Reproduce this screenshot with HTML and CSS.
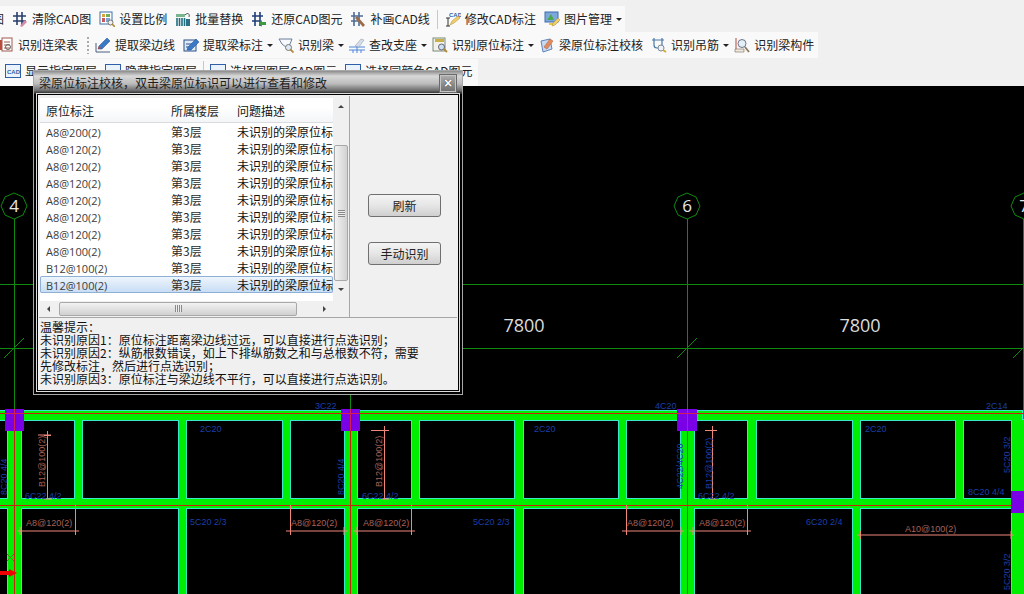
FILE: index.html
```html
<!DOCTYPE html>
<html lang="zh">
<head>
<meta charset="utf-8">
<title>梁原位标注校核</title>
<link rel="stylesheet" href="styles.css">
</head>
<body>
<div class="app">
  <header class="toolbars">
    <div class="bar bar-one">
      <span class="label">图</span>
      <span class="tool"><svg class="ico" viewBox="0 0 16 16"><path d="M5 1v13M10 1v13M1 5h13M1 10h13" stroke="#27406e" stroke-width="1.6" fill="none"/><path d="M8 15l5-6 2 2-5 5z" fill="#d58aa8"/></svg><span class="label">清除CAD图</span></span>
      <span class="tool"><svg class="ico" viewBox="0 0 16 16"><rect x="1" y="1" width="12" height="12" fill="#fff" stroke="#3d6fa8"/><rect x="3" y="3" width="3" height="3" fill="#d9a23c"/><rect x="7" y="3" width="4" height="3" fill="#6fae5a"/><rect x="3" y="7" width="3" height="4" fill="#c75b5b"/><rect x="7" y="7" width="4" height="4" fill="#7aa3d6"/><circle cx="11.5" cy="11.5" r="2.5" fill="#eee" stroke="#777"/><path d="M13 13l3 3" stroke="#b08a3c" stroke-width="1.6"/></svg><span class="label">设置比例</span></span>
      <span class="tool"><svg class="ico" viewBox="0 0 16 16"><rect x="1" y="3" width="9" height="3" fill="#79b58e"/><path d="M2 7v8M4.500 7v8M7 7v8M9.500 7v8" stroke="#1f6f80" stroke-width="1.600"/><path d="M10 4c3-3 5-1 4 2" stroke="#555" fill="none"/><rect x="11" y="8" width="4" height="7" fill="#2b6f86"/></svg><span class="label">批量替换</span></span>
      <span class="tool"><svg class="ico" viewBox="0 0 16 16"><path d="M4 1v14M9 1v14M1 5h11M1 10h8" stroke="#1f3f78" stroke-width="1.600" fill="none"/><path d="M8 12l3-3v2h4v3h-4v2z" fill="#3d9a3d"/></svg><span class="label">还原CAD图元</span></span>
      <span class="tool"><svg class="ico" viewBox="0 0 16 16"><path d="M4 1v14M9 1v14M1 5h12M1 10h9" stroke="#4f6c96" stroke-width="1.600" fill="none"/><path d="M7 5l8 9-2 2-8-9z" fill="#9a6d4a"/></svg><span class="label">补画CAD线</span></span>
      <i class="sep"></i>
      <span class="tool"><svg class="ico" viewBox="0 0 16 16"><text class="ico-cad" x="4" y="6">CAD</text><path d="M1 7h4M3 7v8M1 15h4" stroke="#333" fill="none"/><path d="M5 14l2-4 6-5 2 2-6 5z" fill="#f0cf6a" stroke="#a88a30" stroke-width=".5"/></svg><span class="label">修改CAD标注</span></span>
      <span class="tool"><svg class="ico" viewBox="0 0 16 16"><rect x="1" y="1" width="13" height="10" fill="#7da8dc" stroke="#3e6cae"/><path d="M3 9l4-6 3 6z" fill="#4ea84a"/><rect x="5" y="12" width="6" height="2" fill="#e8c84a"/><path d="M8 15l1-3 5-5 2 2-5 5z" fill="#f0cf6a" stroke="#a88a30" stroke-width=".5"/></svg><span class="label">图片管理</span><i class="caret"></i></span>
    </div>
    <div class="bar bar-two">
      <span class="tool"><svg class="ico" viewBox="0 0 16 16"><rect x="0" y="3" width="6" height="10" fill="#b84a3e"/><rect x="4" y="1" width="10" height="13" fill="#fff" stroke="#a25a50"/><path d="M6 5h6M6 8h6M6 11h6" stroke="#a25a50"/><circle cx="10" cy="10" r="2.500" fill="none" stroke="#666"/></svg><span class="label">识别连梁表</span></span>
      <i class="grip"></i>
      <span class="tool"><svg class="ico" viewBox="0 0 16 16"><path d="M1 15h14M1 15V6" stroke="#4a5f80" fill="none"/><path d="M3 12l1-3 8-8 3 3-8 8z" fill="#3a78c8" stroke="#1f4a86" stroke-width=".5"/><path d="M3 12l1-3 2 2z" fill="#d8452c"/></svg><span class="label">提取梁边线</span></span>
      <span class="tool"><svg class="ico" viewBox="0 0 16 16"><rect x="1" y="3" width="12" height="11" fill="#dfe9f5" stroke="#28508c"/><path d="M3 7h6M3 10h4" stroke="#28508c"/><path d="M4 13l1-3 8-8 3 3-8 8z" fill="#3a78c8" stroke="#1f4a86" stroke-width=".5"/></svg><span class="label">提取梁标注</span><i class="caret"></i></span>
      <span class="tool"><svg class="ico" viewBox="0 0 16 16"><path d="M1 2h13l-2 5-3 4-5-4z" fill="#f6f8fb" stroke="#6a7f9a"/><circle cx="10.500" cy="10.500" r="3" fill="#dfe8f2" stroke="#777"/><path d="M12.500 12.500l3 3" stroke="#b08a3c" stroke-width="1.800"/></svg><span class="label">识别梁</span><i class="caret"></i></span>
      <span class="tool"><svg class="ico" viewBox="0 0 16 16"><path d="M0 10h16M0 13h16M8 9v7M4 13v3M12 13v3" stroke="#4a86d8" fill="none"/><path d="M6 9l6-7 3 1-5 7z" fill="#d4dde8" stroke="#8a98aa" stroke-width=".5"/></svg><span class="label">查改支座</span><i class="caret"></i></span>
      <span class="tool"><svg class="ico" viewBox="0 0 16 16"><rect x="1" y="1" width="12" height="13" fill="#f2f2ea" stroke="#7a8a78"/><rect x="3" y="2" width="9" height="3" fill="#c8b04a"/><circle cx="9.500" cy="10" r="3" fill="#cfe0ee" stroke="#667"/><path d="M12 12l3 3" stroke="#b08a3c" stroke-width="1.800"/></svg><span class="label">识别原位标注</span><i class="caret"></i></span>
      <span class="tool"><svg class="ico" viewBox="0 0 16 16"><path d="M2 4l9-2 2 10-9 3z" fill="#c8d9f0" stroke="#5f86bb"/><path d="M5 10l6-8 3 2-6 8z" fill="#e58a5a" stroke="#a85a3a" stroke-width=".5"/></svg><span class="label">梁原位标注校核</span></span>
      <span class="tool"><svg class="ico" viewBox="0 0 16 16"><path d="M3 1v7q0 3 3 3h2q3 0 3-3V1" stroke="#4a78a8" fill="none" stroke-width="1.200"/><path d="M1 3h12" stroke="#4a78a8"/><circle cx="10" cy="11" r="3" fill="#eef3f8" stroke="#7a8a9a"/><path d="M12 13l3 2" stroke="#d4a92e" stroke-width="1.800"/></svg><span class="label">识别吊筋</span><i class="caret"></i></span>
      <span class="tool"><svg class="ico" viewBox="0 0 16 16"><path d="M2 1v13h8" stroke="#b5483c" fill="none"/><path d="M1 12h9v3H1z" fill="#efe9de" stroke="#7a6a58" stroke-width=".6"/><circle cx="8" cy="6.500" r="4" fill="#e6eef6" stroke="#6a7788"/><path d="M11 10l4 5" stroke="#8a7a60" stroke-width="1.800"/></svg><span class="label">识别梁构件</span></span>
    </div>
    <div class="bar bar-three">
      <span class="tool"><svg class="ico" viewBox="0 0 16 16"><rect x=".5" y="1.500" width="15" height="13" fill="#eaf2fb" stroke="#2f5fa6"/><text class="ico-cad" x="2" y="10.500">CAD</text></svg><span class="label">显示指定图层</span></span>
      <span class="tool"><svg class="ico" viewBox="0 0 16 16"><rect x=".5" y="1.500" width="15" height="13" fill="#eaf2fb" stroke="#2f5fa6"/><text class="ico-cad" x="2" y="10.500">CAD</text></svg><span class="label">隐藏指定图层</span></span>
      <i class="sep"></i>
      <span class="tool"><svg class="ico" viewBox="0 0 16 16"><rect x=".5" y="1.500" width="15" height="13" fill="#eaf2fb" stroke="#2f5fa6"/><text class="ico-cad" x="2" y="10.500">CAD</text></svg><span class="label">选择同图层CAD图元</span></span>
      <span class="tool"><svg class="ico" viewBox="0 0 16 16"><rect x=".5" y="1.500" width="15" height="13" fill="#eaf2fb" stroke="#2f5fa6"/><text class="ico-cad" x="2" y="10.500">CAD</text></svg><span class="label">选择同颜色CAD图元</span></span>
    </div>
  </header>

  <main class="canvas">
    <svg class="drawing" viewBox="0 86 1024 508" xmlns="http://www.w3.org/2000/svg">
      <defs>
        <g id="frame">
          <rect x="-4" y="411" width="1026" height="9"/>
          <rect x="-4" y="499" width="1016" height="9"/>
          <rect x="8" y="420" width="13" height="180"/>
          <rect x="345" y="420" width="12" height="180"/>
          <rect x="681" y="420" width="13" height="180"/>
          <rect x="1012" y="420" width="16" height="180"/>
          <rect x="75" y="420" width="7" height="80"/>
          <rect x="179" y="420" width="7" height="80"/>
          <rect x="283" y="420" width="7" height="80"/>
          <rect x="412" y="420" width="7" height="80"/>
          <rect x="515" y="420" width="8" height="80"/>
          <rect x="619" y="420" width="7" height="80"/>
          <rect x="748" y="420" width="8" height="80"/>
          <rect x="853" y="420" width="7" height="80"/>
          <rect x="956" y="420" width="7" height="80"/>
          <rect x="179" y="507" width="7" height="93"/>
          <rect x="515" y="507" width="8" height="93"/>
          <rect x="853" y="507" width="7" height="93"/>
        </g>
      </defs>

      <g class="grid">
        <path d="M0 284.500H1024M0 348.500H1024M14.500 219V420M350.500 219V420M687.500 219V420M1023.500 219V420"/>
        <path d="M4 358L24 338M340 358L360 338M677 358L697 338M1013 358L1033 338"/>
        <path d="M14 193l9 4 4 9-4 9-9 4-9-4-4-9 4-9z"/>
        <path d="M687 193l9 4 4 9-4 9-9 4-9-4-4-9 4-9z"/>
        <path d="M1024 193l9 4 4 9-4 9-9 4-9-4-4-9 4-9z"/>
      </g>
      <text class="axis" x="14" y="212">4</text>
      <text class="axis" x="687" y="212">6</text>
      <text class="axis" x="1024" y="212">7</text>
      <text class="span" x="524" y="332">7800</text>
      <text class="span" x="860" y="332">7800</text>

      <use href="#frame" class="beam-edge"/>
      <use href="#frame" class="beam-fill"/>

      <g class="axis-red">
        <path d="M0 413.500H1024M0 505.500H1024M14.500 409V594M350.500 409V594M687.500 409V594"/>
      </g>
      <g class="col">
        <rect x="5" y="409" width="19" height="22"/>
        <rect x="341" y="409" width="19" height="22"/>
        <rect x="677" y="409" width="20" height="22"/>
        <rect x="1011" y="491" width="13" height="22"/>
      </g>
      <g class="col-line">
        <path d="M5 413.500H24M341 413.500H360M677 413.500H697M14.500 409V431M350.500 409V431M687.500 409V431"/>
      </g>

      <g class="dim">
        <path d="M47.500 435V499M38 435H51M44 435.500h7M47.500 431v8M44 499h8"/>
        <path d="M384.500 430V499M371 430.500H389M384.500 426v8M381 499h8"/>
        <path d="M712.500 430V499M705 430.500H717M712.500 426v8M709 499h8"/>
        <path d="M17 531H79M75.500 505V535M20 527v8"/>
        <path d="M286 531H348M290.500 505V535M344 527v8"/>
        <path d="M353 531H415M411.500 505V535M357 527v8"/>
        <path d="M622 531H684M626.500 505V535M681 527v8"/>
        <path d="M689 531H751M747.500 505V535M693 527v8"/>
        <path d="M857 535H1014M860.500 531v8M1011 531v8"/>
      </g>
      <g class="dim-text">
        <text x="26" y="526">A8@120(2)</text>
        <text x="291" y="526">A8@120(2)</text>
        <text x="363" y="526">A8@120(2)</text>
        <text x="627" y="526">A8@120(2)</text>
        <text x="699" y="526">A8@120(2)</text>
        <text x="905" y="532">A10@100(2)</text>
        <text transform="translate(45 487) rotate(-90)">B12@100(2)</text>
        <text transform="translate(382 487) rotate(-90)">B12@100(2)</text>
      </g>
      <g class="rebar">
        <text x="315" y="409">3C22</text>
        <text x="655" y="409">4C20</text>
        <text x="986" y="409">2C14</text>
        <text x="200" y="432">2C20</text>
        <text x="534" y="432">2C20</text>
        <text x="865" y="432">2C20</text>
        <text x="25" y="499">6C22 4/2</text>
        <text x="362" y="499">6C22 4/2</text>
        <text x="698" y="499">6C22 4/2</text>
        <text x="968" y="495">8C20 4/4</text>
        <text x="190" y="525">5C20 2/3</text>
        <text x="473" y="525">5C20 2/3</text>
        <text x="806" y="525">6C20 2/4</text>
        <text transform="translate(7 495) rotate(-90)">8C20 4/4</text>
        <text transform="translate(344 495) rotate(-90)">8C20 4/4</text>
        <text transform="translate(683 489) rotate(-90)">4C22/4C20</text>
        <text transform="translate(712 489) rotate(-90)">B12@100(2)</text>
        <text transform="translate(1010 473) rotate(-90)">5C20 3/2</text>
        <text transform="translate(1010 590) rotate(-90)">5C20 3/2</text>
      </g>
      <path class="mark" d="M7 554l7 7M14 554l-7 7"/>
      <path class="arrow" d="M0 571h9v-2l8 4-8 4v-2H0z"/>
    </svg>
  </main>

  <section class="dialog">
    <div class="dialog-title">
      <span>梁原位标注校核&#xFF0C;双击梁原位标识可以进行查看和修改</span>
      <span class="close">×</span>
    </div>
    <div class="client">
      <div class="upper">
        <div class="listpane">
          <div class="listview">
            <div class="table">
              <div class="row head"><span>原位标注</span><span>所属楼层</span><span>问题描述</span></div>
              <div class="row"><span class="code">A8@200(2)</span><span>第3层</span><span>未识别的梁原位标注</span></div>
              <div class="row"><span class="code">A8@120(2)</span><span>第3层</span><span>未识别的梁原位标注</span></div>
              <div class="row"><span class="code">A8@120(2)</span><span>第3层</span><span>未识别的梁原位标注</span></div>
              <div class="row"><span class="code">A8@120(2)</span><span>第3层</span><span>未识别的梁原位标注</span></div>
              <div class="row"><span class="code">A8@120(2)</span><span>第3层</span><span>未识别的梁原位标注</span></div>
              <div class="row"><span class="code">A8@120(2)</span><span>第3层</span><span>未识别的梁原位标注</span></div>
              <div class="row"><span class="code">A8@120(2)</span><span>第3层</span><span>未识别的梁原位标注</span></div>
              <div class="row"><span class="code">A8@100(2)</span><span>第3层</span><span>未识别的梁原位标注</span></div>
              <div class="row"><span class="code">B12@100(2)</span><span>第3层</span><span>未识别的梁原位标注</span></div>
              <div class="row selected"><span class="code">B12@100(2)</span><span>第3层</span><span>未识别的梁原位标注</span></div>
            </div>
            <div class="vscroll">
              <i class="tri up"></i>
              <div class="vthumb"><b class="vgrip"></b></div>
              <i class="tri down"></i>
            </div>
          </div>
          <div class="hscroll">
            <i class="tri left"></i>
            <div class="hthumb"><b class="hgrip"></b></div>
            <i class="tri right"></i>
          </div>
        </div>
        <div class="actions">
          <button class="btn" type="button">刷新</button>
          <button class="btn" type="button">手动识别</button>
        </div>
      </div>
      <div class="notes">
        <div>温馨提示&#xFF1A;</div>
        <div>未识别原因1&#xFF1A;原位标注距离梁边线过远&#xFF0C;可以直接进行点选识别&#xFF1B;</div>
        <div>未识别原因2&#xFF1A;纵筋根数错误&#xFF0C;如上下排纵筋数之和与总根数不符&#xFF0C;需要</div>
        <div>先修改标注&#xFF0C;然后进行点选识别&#xFF1B;</div>
        <div>未识别原因3&#xFF1A;原位标注与梁边线不平行&#xFF0C;可以直接进行点选识别。</div>
      </div>
    </div>
  </section>
</div>
</body>
</html>
```
FILE: styles.css
```css
* { box-sizing: border-box; }
html, body { margin: 0; height: 100%; overflow: hidden; }
body {
  font-family: "Noto Sans CJK SC", "Liberation Sans", sans-serif;
  font-size: 12px;
  color: #222;
  background: #000;
}
.app {
  position: relative;
  width: 1024px;
  height: 594px;
  display: flex;
  flex-direction: column;
}

/* toolbars */
.toolbars {
  height: 86px;
  flex: none;
  background: #f0f0f0;
  display: flex;
  flex-direction: column;
  padding-top: 6px;
}
.bar {
  display: flex;
  align-items: center;
  gap: 8px;
  height: 26px;
  background: #f9f9f9;
  white-space: nowrap;
  overflow: hidden;
}
.bar-one { width: 633px; margin-left: -8px; }
.bar-two { width: 820px; margin-left: -2px; }
.bar-three { width: 478px; height: 27px; margin-top: 1px; padding-left: 5px; padding-bottom: 4px; }
.tool { display: flex; align-items: center; gap: 4px; flex: none; }
.label { line-height: 16px; flex: none; }
.ico { width: 16px; height: 16px; flex: none; display: block; }
.ico-cad { font-family: "Liberation Sans", sans-serif; font-size: 6px; font-weight: 700; fill: #2f5fa6; }
.caret {
  width: 0; height: 0; margin: 0 -3px 0 0;
  border-left: 3px solid transparent;
  border-right: 3px solid transparent;
  border-top: 3px solid #222;
}
.sep { width: 1px; height: 19px; background: #c8c8c8; flex: none; margin: 0 -2px; }
.bar-one .sep { margin: 0 -1px 0 -1px; }
.grip {
  width: 2px; height: 17px; flex: none; margin: 0 -2px 0 1px;
  background: repeating-linear-gradient(to bottom, #aaa 0 2px, transparent 2px 4px);
}

/* drawing */
.canvas { flex: 1; background: #000; min-height: 0; }
.drawing { display: block; width: 1024px; height: 508px; }
.grid path { fill: none; stroke: #0f8a0f; stroke-width: 1; }
.axis {
  font-family: "Open Sans", sans-serif; font-size: 17px; fill: #e8e8e8; text-anchor: middle;
}
.span { font-family: "Open Sans", sans-serif; font-size: 18px; fill: #dcdcdc; text-anchor: middle; }
.beam-edge { fill: #39e8c8; stroke: #39e8c8; stroke-width: 2; }
.beam-fill { fill: #00ee00; }
.axis-red path { fill: none; stroke: #c8200c; stroke-width: 1; }
.col { fill: #7a00e6; }
.col-line path { fill: none; stroke: #d4204c; stroke-width: 1; }
.dim path { fill: none; stroke: #f0887a; stroke-width: 1; }
.dim-text text { font-family: "Liberation Sans", sans-serif; font-size: 9px; fill: #a86258; }
.rebar text { font-family: "Liberation Sans", sans-serif; font-size: 9px; fill: #1a3fa8; }
.mark { fill: none; stroke: #6a6a20; stroke-width: 1; }
.arrow { fill: #f00000; }

/* dialog */
.dialog {
  position: absolute;
  left: 33px;
  top: 70px;
  width: 430px;
  height: 325px;
  padding: 0 3px 3px;
  background: #000;
  border: 1px solid #a8a8a8;
}
.dialog-title {
  height: 23px;
  margin: 0 -3px;
  padding: 0 5px;
  display: flex;
  align-items: center;
  justify-content: space-between;
  color: #1e1e1e;
  background: linear-gradient(to bottom, #8c8c8c 0, #d8d8d8 22%, #bcbcbc 55%, #6c6c6c 85%, #1c1c1c 100%);
}
.close {
  width: 18px; height: 19px;
  margin-top: 2px;
  border: 1px solid #6a6a6a;
  background: linear-gradient(to bottom, #b0b0b0, #6e6e6e);
  box-shadow: inset 0 0 0 1px #c4c4c4;
  color: #fff;
  font: 700 14px/16px "Liberation Sans", sans-serif;
  text-align: center;
  text-shadow: 0 0 1px #000;
  flex: none;
}
.client {
  height: 297px;
  background: #f0f0f0;
  border: 1px solid #000;
  box-shadow: 0 0 0 1px #dcdcdc;
  padding: 1px;
  display: flex;
  flex-direction: column;
}
.upper { display: flex; height: 222px; flex: none; border-bottom: 1px solid #a6a6a6; }
.listpane { width: 311px; padding: 2px 0 0 1px; border-right: 1px solid #a6a6a6; flex: none; }
.listview { display: flex; height: 203px; background: #fff; }
.table { width: 293px; overflow: hidden; flex: none; }
.row {
  display: grid;
  grid-template-columns: 125px 66px 1fr;
  height: 17px;
  padding-left: 6px;
  line-height: 17px;
  white-space: nowrap;
  color: #2a2a2a;
}
.row span { overflow: hidden; }
.row span:last-child { overflow: visible; color: #111; }
.head {
  height: 25px;
  line-height: 25px;
  border-bottom: 1px solid #d8dbe0;
  background: linear-gradient(to bottom, #fff 0, #fff 40%, #f3f5f8 100%);
  color: #222;
}
.code { padding-top: 1px; font-family: "Open Sans", "Liberation Sans", sans-serif; font-size: 11px; color: #3c3c3c; }
.selected {
  border-radius: 2px;
  box-shadow: inset 0 0 0 1px #8eb0d4;
  background: linear-gradient(to bottom, #f0f6fd, #c6dcf4);
}
.vscroll {
  flex: 1;
  background: #f0f0f0;
  display: flex;
  flex-direction: column;
  align-items: center;
  padding: 7px 1px 5px;
}
.vthumb {
  width: 14px;
  height: 136px;
  margin: 37px 0 7px;
  border: 1px solid #a8a8a8;
  border-radius: 2px;
  background: linear-gradient(to right, #f2f2f2, #d2d2d2);
  display: flex;
  align-items: center;
  justify-content: center;
}
.vgrip { width: 7px; height: 7px; background: repeating-linear-gradient(to bottom, #888 0 1px, #eee 1px 2px); }
.hscroll {
  display: flex;
  align-items: center;
  width: 293px;
  height: 15px;
  padding: 0 7px;
  background: #f0f0f0;
}
.hthumb {
  width: 238px;
  height: 14px;
  margin: 0 auto 0 9px;
  border: 1px solid #a8a8a8;
  border-radius: 2px;
  background: linear-gradient(to bottom, #f2f2f2, #d0d0d0);
  display: flex;
  align-items: center;
  justify-content: center;
}
.hgrip { width: 7px; height: 7px; background: repeating-linear-gradient(to right, #888 0 1px, #eee 1px 2px); }
.tri { width: 0; height: 0; flex: none; border: 3px solid transparent; }
.tri.up { border-bottom-color: #444; border-top-width: 0; }
.tri.down { border-top-color: #444; border-bottom-width: 0; }
.tri.left { border-right-color: #444; border-left-width: 0; }
.tri.right { border-left-color: #444; border-right-width: 0; }
.actions {
  flex: 1;
  display: flex;
  flex-direction: column;
  align-items: center;
  gap: 25px;
  padding: 98px 0 0 2px;
}
.btn {
  width: 73px;
  height: 23px;
  padding: 0;
  border: 1px solid #707070;
  border-radius: 3px;
  background: linear-gradient(to bottom, #f4f4f4 0, #e6e6e6 50%, #cfcfcf 100%);
  font: inherit;
  color: #222;
}
.notes { padding: 2px 0 0 1px; line-height: 13px; white-space: nowrap; color: #111; }
```
